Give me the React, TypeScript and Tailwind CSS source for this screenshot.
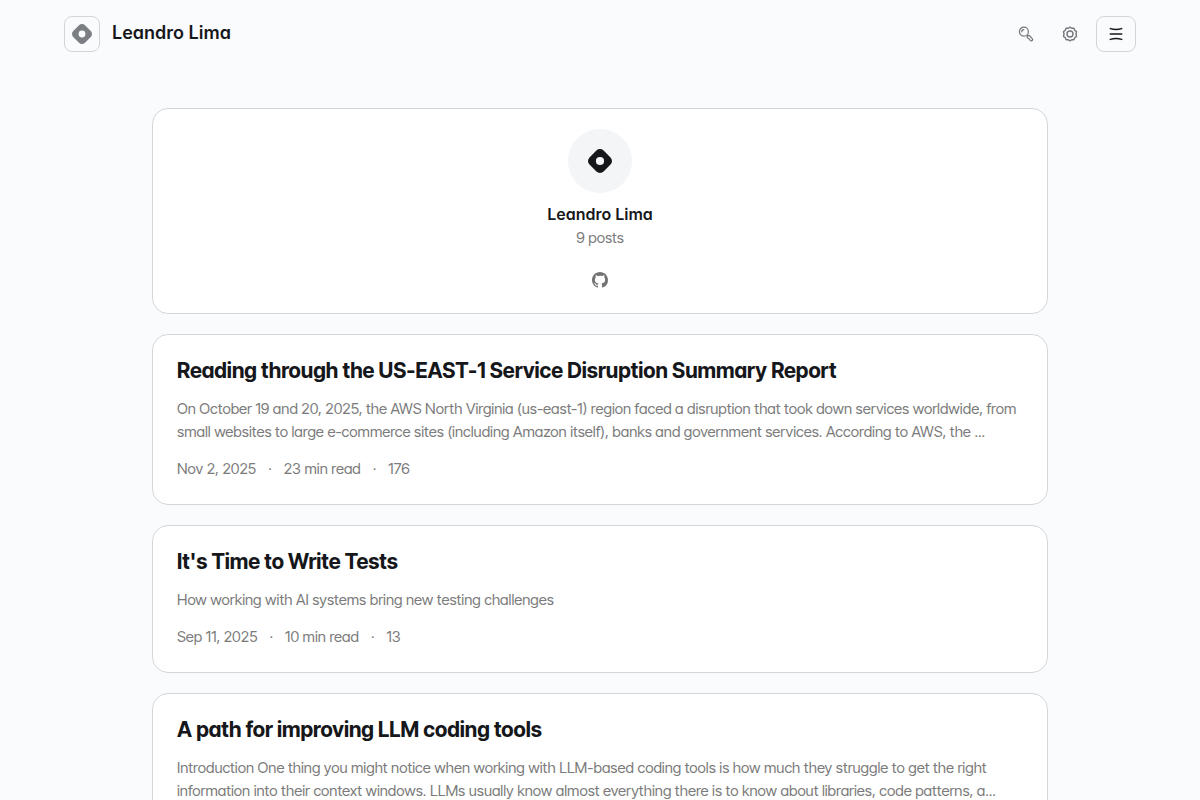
import React from 'react';

interface Post {
  title: string;
  excerpt: string;
  meta?: string[];
}

const posts: Post[] = [
  {
    title: 'Reading through the US-EAST-1 Service Disruption Summary Report',
    excerpt:
      'On October 19 and 20, 2025, the AWS North Virginia (us-east-1) region faced a disruption that took down services worldwide, from small websites to large e-commerce sites (including Amazon itself), banks and government services. According to AWS, the ...',
    meta: ['Nov 2, 2025', '23 min read', '176'],
  },
  {
    title: "It's Time to Write Tests",
    excerpt: 'How working with AI systems bring new testing challenges',
    meta: ['Sep 11, 2025', '10 min read', '13'],
  },
  {
    title: 'A path for improving LLM coding tools',
    excerpt:
      'Introduction One thing you might notice when working with LLM-based coding tools is how much they struggle to get the right information into their context windows. LLMs usually know almost everything there is to know about libraries, code patterns, a...',
  },
];

const Logo: React.FC<{ className: string }> = ({ className }) => (
  <svg viewBox="0 0 24 24" className={className} fill="currentColor" aria-hidden="true">
    <path
      fillRule="evenodd"
      d="M8.4 1.5a5.1 5.1 0 0 1 7.2 0l6.9 6.9a5.1 5.1 0 0 1 0 7.2l-6.9 6.9a5.1 5.1 0 0 1-7.2 0l-6.9-6.9a5.1 5.1 0 0 1 0-7.2zM12 7.9a4.1 4.1 0 1 0 0 8.2 4.1 4.1 0 0 0 0-8.2z"
    />
  </svg>
);

const SearchIcon = () => (
  <svg viewBox="0 0 16 16" className="size-4" fill="none" stroke="currentColor" strokeWidth="1.2" strokeLinecap="round" strokeLinejoin="round" aria-hidden="true">
    <circle cx="5.9" cy="5.7" r="4.5" />
    <path d="M3.7 5.8a2.2 2.2 0 0 1 2.1-2.2M9.2 9l.9.6" />
    <path d="M9.6 12a1.5 1.5 0 0 1 .1-2.1 1.5 1.5 0 0 1 2.1.1l2.4 2.6a1.3 1.3 0 0 1-1.9 1.8c-.9-1-1.1-2.1-2.7-2.4z" />
  </svg>
);

const SettingsIcon = () => (
  <svg viewBox="0 0 16 16" className="size-4" fill="none" stroke="currentColor" strokeWidth="1.4" strokeLinejoin="round" aria-hidden="true">
    <path d="M8 1.1 9.7 2.3l2.2-.1.8 2.1 1.8 1.3L14 8l.5 2.4-1.8 1.3-.8 2.1-2.2-.1L8 14.9l-1.7-1.2-2.2.1-.8-2.1-1.8-1.3L2 8l-.5-2.4 1.8-1.3.8-2.1 2.2.1z" />
    <circle cx="8" cy="8" r="3" />
  </svg>
);

const MenuIcon = () => (
  <svg viewBox="0 0 16 16" className="size-4" fill="none" stroke="currentColor" strokeWidth="1.5" strokeLinecap="round" aria-hidden="true">
    <path d="M2.3 2.6c3.4 1 8 1 11.4 0M2.3 8h11.4M2.3 13.4c3.4-1 8-1 11.4 0" />
  </svg>
);

const GithubIcon = () => (
  <svg viewBox="0 0 16 16" className="size-4" fill="currentColor" aria-hidden="true">
    <path d="M8 0C3.58 0 0 3.58 0 8c0 3.54 2.29 6.53 5.47 7.59.4.07.55-.17.55-.38 0-.19-.01-.82-.01-1.49-2.01.37-2.53-.49-2.69-.94-.09-.23-.48-.94-.82-1.13-.28-.15-.68-.52-.01-.53.63-.01 1.08.58 1.23.82.72 1.21 1.87.87 2.33.66.07-.52.28-.87.51-1.07-1.78-.2-3.64-.89-3.64-3.95 0-.87.31-1.59.82-2.15-.08-.2-.36-1.02.08-2.12 0 0 .67-.21 2.2.82A7.6 7.6 0 0 1 8 3.86c.68 0 1.36.09 2 .27 1.53-1.04 2.2-.82 2.2-.82.44 1.1.16 1.92.08 2.12.51.56.82 1.27.82 2.15 0 3.07-1.87 3.75-3.65 3.95.29.25.54.73.54 1.48 0 1.07-.01 1.93-.01 2.2 0 .21.15.46.55.38A8.01 8.01 0 0 0 16 8c0-4.42-3.58-8-8-8z" />
  </svg>
);

const Header = () => (
  <header className="flex items-center justify-between px-16 py-4">
    <a href="#" className="flex items-center gap-3">
      <span className="flex size-9 items-center justify-center rounded-lg border border-[#d3d6d9] text-[#7b7f84]">
        <Logo className="size-5" />
      </span>
      <span className="pb-0.5 font-['Inter',sans-serif] text-lg leading-6 font-semibold">Leandro Lima</span>
    </a>
    <div className="flex items-center gap-2">
      <button type="button" aria-label="Search" className="flex size-9 items-center justify-center text-[#73777b]">
        <SearchIcon />
      </button>
      <button type="button" aria-label="Settings" className="flex size-9 items-center justify-center text-[#73777b]">
        <SettingsIcon />
      </button>
      <button type="button" aria-label="Menu" className="flex h-9 w-10 items-center justify-center rounded-lg border border-[#d3d6d9]">
        <MenuIcon />
      </button>
    </div>
  </header>
);

const ProfileCard = () => (
  <section className="flex flex-col items-center rounded-2xl border border-[#d3d7da] bg-white pt-5 pb-[19px]">
    <div className="mb-[9px] flex size-16 items-center justify-center rounded-full bg-[#f3f5f7]">
      <Logo className="size-6" />
    </div>
    <h1 className="font-['Inter',sans-serif] text-base leading-6 font-semibold">Leandro Lima</h1>
    <p className="text-[15px] leading-6 text-[#7b7b7b]">9 posts</p>
    <a href="#" aria-label="GitHub" className="mt-4 flex size-7 items-center justify-center text-[#737373]">
      <GithubIcon />
    </a>
  </section>
);

const PostCard: React.FC<{ post: Post }> = ({ post }) => (
  <article className="flex flex-col gap-[14px] rounded-2xl border border-[#d3d7da] bg-white p-6">
    <h2 className="text-[21px] leading-6 font-bold">
      <a href="#">{post.title}</a>
    </h2>
    <p className="text-[15px] leading-[23px] text-[#7b7b7b]">{post.excerpt}</p>
    {post.meta && (
      <div className="flex gap-3 text-[15px] leading-[23px] text-[#7b7b7b]">
        {post.meta.map((item, i) => (
          <React.Fragment key={item}>
            {i > 0 && <span>·</span>}
            <span>{item}</span>
          </React.Fragment>
        ))}
      </div>
    )}
  </article>
);

export default function App() {
  return (
    <div className="min-h-screen bg-[#fafbfd] font-['Inter_Tight','Inter',sans-serif] text-[#15171a] [font-feature-settings:'cv11']">
      <Header />
      <main className="mx-auto flex max-w-4xl flex-col gap-5 pt-10 pb-10">
        <ProfileCard />
        {posts.map((post) => (
          <PostCard key={post.title} post={post} />
        ))}
      </main>
    </div>
  );
}
